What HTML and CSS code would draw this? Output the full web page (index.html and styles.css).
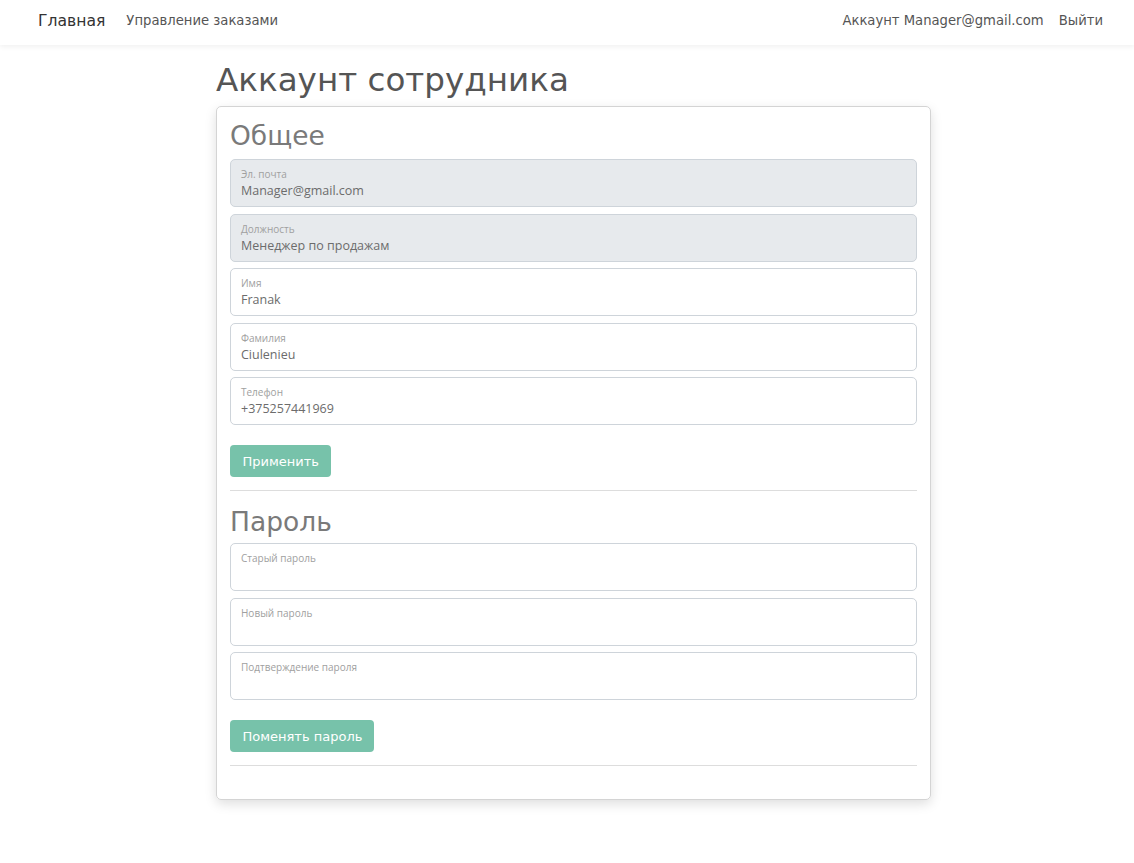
FILE: index.html
```html
<!DOCTYPE html>
<html lang="ru">
<head>
<meta charset="utf-8">
<title>Аккаунт сотрудника</title>
<link rel="stylesheet" href="styles.css">
</head>
<body>
<header class="navbar">
  <nav class="nav-left">
    <a class="brand" href="#">Главная</a>
    <a class="nav-link" href="#">Управление заказами</a>
  </nav>
  <nav class="nav-right">
    <a class="nav-link" href="#">Аккаунт Manager@gmail.com</a>
    <a class="nav-link" href="#">Выйти</a>
  </nav>
</header>
<main class="page">
  <h1 class="page-title">Аккаунт сотрудника</h1>
  <section class="card">
    <h2 class="section-title">Общее</h2>
    <div class="field disabled"><span class="field-label">Эл. почта</span><span class="field-value">Manager@gmail.com</span></div>
    <div class="field disabled"><span class="field-label">Должность</span><span class="field-value">Менеджер по продажам</span></div>
    <div class="field"><span class="field-label">Имя</span><span class="field-value">Franak</span></div>
    <div class="field"><span class="field-label">Фамилия</span><span class="field-value">Ciulenieu</span></div>
    <div class="field"><span class="field-label">Телефон</span><span class="field-value">+375257441969</span></div>
    <button class="btn" type="button">Применить</button>
    <hr class="divider">
    <h2 class="section-title second">Пароль</h2>
    <div class="field"><span class="field-label">Старый пароль</span><span class="field-value"></span></div>
    <div class="field"><span class="field-label">Новый пароль</span><span class="field-value"></span></div>
    <div class="field"><span class="field-label">Подтверждение пароля</span><span class="field-value"></span></div>
    <button class="btn" type="button">Поменять пароль</button>
    <hr class="divider">
  </section>
</main>
</body>
</html>
```
FILE: styles.css
```css
* { box-sizing: border-box; }
body {
  margin: 0;
  background: #fff;
  font-family: "DejaVu Sans", "Noto Sans", sans-serif;
  color: #555;
}
.navbar {
  height: 45px;
  display: flex;
  justify-content: space-between;
  align-items: center;
  padding: 0 31px 4px 38px;
  background: #fff;
  box-shadow: 0 2px 5px rgba(0,0,0,0.06);
}
.nav-left, .nav-right { display: flex; align-items: center; }
.nav-left { gap: 21px; }
.nav-right { gap: 15px; }
a { text-decoration: none; }
.brand { font-size: 15.6px; color: #333; }
.nav-link { font-size: 13.2px; color: #555; }
.page {
  width: 715px;
  margin: 0 0 0 216px;
  padding-top: 15px;
  padding-bottom: 40px;
}
.page-title {
  margin: 0 0 6px;
  font-size: 32.6px;
  font-weight: 400;
  line-height: 40px;
  color: #555;
}
.card {
  border: 1px solid #d4d4d4;
  border-radius: 5px;
  box-shadow: 0 4px 12px rgba(0,0,0,0.13);
  padding: 13px 13px 33px;
  display: flex;
  flex-direction: column;
}
.section-title {
  margin: 0 0 7px;
  font-size: 26.5px;
  font-weight: 400;
  line-height: 32px;
  color: #7a7a7a;
}
.section-title.second { margin-top: 15px; margin-bottom: 5px; }
.field {
  height: 48px;
  border: 1px solid #ced4da;
  border-radius: 5px;
  padding: 7px 10px 0;
  margin-bottom: 6.5px;
  display: flex;
  flex-direction: column;
  font-family: "Open Sans", "Noto Sans", sans-serif;
}
.field.disabled { background: #e7eaed; }
.field-label { font-size: 10px; line-height: 14px; color: #a0a0a0; }
.field-value { font-size: 12.5px; line-height: 19px; color: #6c6c6c; }
.btn {
  align-self: flex-start;
  margin-top: 13.5px;
  height: 32px;
  padding: 0 12px 0 12.5px;
  border: none;
  border-radius: 4px;
  background: #77c2aa;
  color: #fff;
  font-family: "DejaVu Sans", "Noto Sans", sans-serif;
  font-size: 13px;
}
.divider {
  width: 100%;
  margin: 13px 0 0;
  border: 0;
  border-top: 1px solid #ddd;
}
```
